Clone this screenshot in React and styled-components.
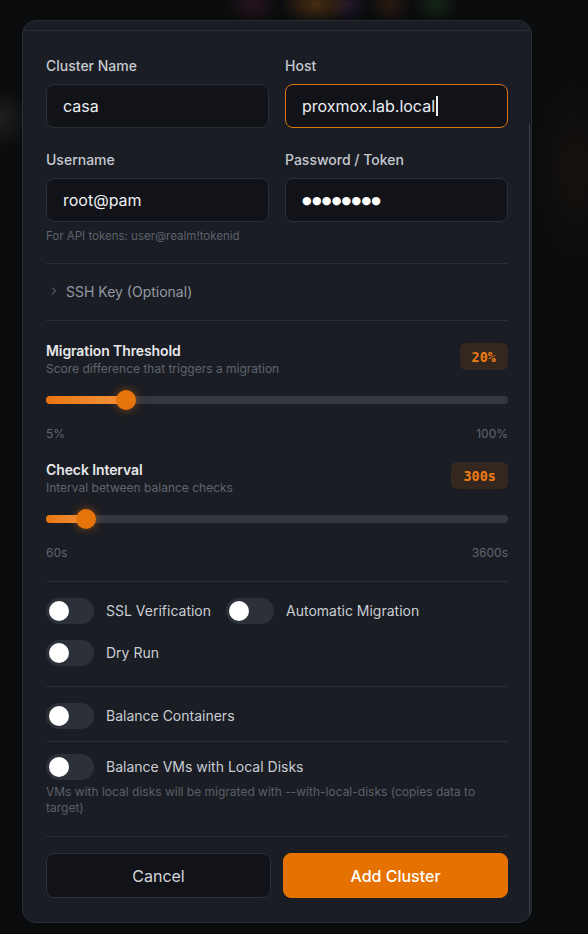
import React from "react";
import styled, { createGlobalStyle } from "styled-components";
import { ChevronRight } from "lucide-react";

const GlobalStyle = createGlobalStyle`
  html, body {
    margin: 0;
    height: 100%;
  }
  body {
    background:
      radial-gradient(ellipse 26px 18px at 253px 4px, rgba(110, 40, 70, 0.28), transparent),
      radial-gradient(ellipse 36px 20px at 316px 4px, rgba(170, 95, 20, 0.38), transparent),
      radial-gradient(ellipse 22px 18px at 348px 4px, rgba(100, 60, 130, 0.24), transparent),
      radial-gradient(ellipse 22px 18px at 390px 4px, rgba(140, 75, 20, 0.24), transparent),
      radial-gradient(ellipse 22px 18px at 436px 4px, rgba(40, 120, 40, 0.24), transparent),
      radial-gradient(ellipse 40px 90px at 575px 170px, rgba(90, 50, 10, 0.14), transparent),
      radial-gradient(ellipse 30px 30px at 0px 118px, rgba(120, 120, 120, 0.18), transparent),
      #0b0c0e;
    font-family: Inter, "Noto Sans", sans-serif;
    color: #e5e7eb;
  }
`;

const Page = styled.div`
  min-height: 100vh;
  box-sizing: border-box;
  padding: 20px 0 0 22px;
`;

const Modal = styled.div`
  position: relative;
  width: 510px;
  box-sizing: border-box;
  background: #1a1d23;
  border: 1px solid #2a2e36;
  border-radius: 14px;
  overflow: hidden;

  &::after {
    content: "";
    position: absolute;
    right: 1px;
    top: 103px;
    bottom: 4px;
    width: 1px;
    background: #3a3f48;
  }
`;

const TopStrip = styled.div`
  height: 9px;
  border-bottom: 1px solid #2a2e36;
`;

const Body = styled.div`
  padding: 25px 23px 24px;
`;

const FieldGrid = styled.div`
  display: grid;
  grid-template-columns: 1fr 1fr;
  column-gap: 16px;
  row-gap: 22px;
`;

const Field = styled.div`
  display: flex;
  flex-direction: column;
  gap: 8px;
`;

const Label = styled.label`
  font-size: 14px;
  line-height: 20px;
  font-weight: 500;
  color: #c5c9d0;
`;

const InputBox = styled.div`
  height: 44px;
  box-sizing: border-box;
  display: flex;
  align-items: center;
  padding: 0 16px;
  background: #111318;
  border: 1px solid ${(p) => (p.$focused ? "#dc7410" : "#2a2e36")};
  border-radius: 8px;
  font-size: 16px;
  color: #eceef1;
`;

const Caret = styled.span`
  display: inline-block;
  width: 1.5px;
  height: 20px;
  margin-left: 1px;
  background: #eceef1;
`;

const Dots = styled.span`
  font-family: "DejaVu Sans", sans-serif;
  font-size: 11px;
  letter-spacing: 0.3px;
  color: #ffffff;
`;

const Helper = styled.div`
  margin-top: -2px;
  font-size: 11.5px;
  line-height: 16px;
  color: #5d636d;
`;

const Divider = styled.div`
  height: 1px;
  background: #2a2e36;
  margin-top: ${(p) => p.$mt}px;
`;

const Collapse = styled.div`
  display: flex;
  align-items: center;
  gap: 6px;
  height: 20px;
  padding: 17px 0 19px 2px;
  font-size: 14px;
  color: #9399a3;
`;

const SliderBlock = styled.div`
  margin-top: ${(p) => p.$mt}px;
`;

const SliderHead = styled.div`
  display: flex;
  justify-content: space-between;
  align-items: flex-start;
`;

const Title = styled.div`
  font-size: 14px;
  line-height: 20px;
  font-weight: 600;
  letter-spacing: -0.1px;
  color: #e6e8eb;
`;

const Sub = styled.div`
  font-size: 12px;
  line-height: 16px;
  color: #5f6570;
`;

const Badge = styled.div`
  margin-top: 2px;
  height: 27px;
  padding: 0 12px;
  display: flex;
  align-items: center;
  border-radius: 6px;
  background: #33271f;
  color: #f07d14;
  font-family: "DejaVu Sans Mono", "Liberation Mono", monospace;
  font-size: 13.5px;
  font-weight: 700;
`;

const Track = styled.div`
  position: relative;
  margin-top: 13px;
  height: 20px;
  display: flex;
  align-items: center;

  &::before {
    content: "";
    position: absolute;
    left: 0;
    right: 0;
    height: 8px;
    border-radius: 4px;
    background: #33373f;
  }
`;

const Fill = styled.div`
  position: relative;
  height: 8px;
  border-radius: 4px;
  background: linear-gradient(90deg, #e8760f, #f39340);
`;

const Thumb = styled.div`
  position: absolute;
  top: 0;
  width: 20px;
  height: 20px;
  border-radius: 50%;
  background: #e5740a;
  box-shadow: 0 0 10px rgba(240, 120, 20, 0.5);
`;

const RangeLabels = styled.div`
  margin-top: 16px;
  display: flex;
  justify-content: space-between;
  font-size: 12px;
  line-height: 16px;
  color: #5f6570;
`;

const ToggleGroup = styled.div`
  display: flex;
  flex-wrap: wrap;
  column-gap: 15px;
  row-gap: 16px;
  padding-top: ${(p) => p.$pt}px;
`;

const ToggleItem = styled.div`
  display: flex;
  align-items: center;
  gap: 12px;
  font-size: 14px;
  line-height: 20px;
  color: #c9cdd3;
`;

const Switch = styled.div`
  width: 48px;
  height: 26px;
  box-sizing: border-box;
  padding: 0 3px;
  display: flex;
  align-items: center;
  border-radius: 13px;
  background: #2c3038;
`;

const Knob = styled.div`
  width: 20px;
  height: 20px;
  border-radius: 50%;
  background: #ffffff;
`;

const Note = styled.div`
  margin-top: 4px;
  font-size: 12px;
  line-height: 16px;
  color: #5a606a;
`;

const Actions = styled.div`
  margin-top: 16px;
  display: grid;
  grid-template-columns: 1fr 1fr;
  gap: 12px;
`;

const Button = styled.button`
  height: 45px;
  border-radius: 8px;
  font-family: inherit;
  font-size: 16px;
  font-weight: ${(p) => (p.$primary ? 500 : 400)};
  cursor: pointer;
  border: 1px solid ${(p) => (p.$primary ? "#e57200" : "#2c3038")};
  background: ${(p) => (p.$primary ? "#e57200" : "#111318")};
  color: ${(p) => (p.$primary ? "#ffffff" : "#d4d7dc")};
`;

function Slider({ title, sub, badge, value, min, max, minLabel, maxLabel, mt }) {
  const pct = (value - min) / (max - min);
  return (
    <SliderBlock $mt={mt}>
      <SliderHead>
        <div>
          <Title>{title}</Title>
          <Sub>{sub}</Sub>
        </div>
        <Badge>{badge}</Badge>
      </SliderHead>
      <Track>
        <Fill style={{ width: `calc(10px + ${pct} * (100% - 20px))` }} />
        <Thumb style={{ left: `calc(${pct} * (100% - 20px))` }} />
      </Track>
      <RangeLabels>
        <span>{minLabel}</span>
        <span>{maxLabel}</span>
      </RangeLabels>
    </SliderBlock>
  );
}

function Toggle({ label }) {
  return (
    <ToggleItem>
      <Switch>
        <Knob />
      </Switch>
      {label}
    </ToggleItem>
  );
}

export default function App() {
  return (
    <>
      <GlobalStyle />
      <Page>
        <Modal>
          <TopStrip />
          <Body>
            <FieldGrid>
              <Field>
                <Label>Cluster Name</Label>
                <InputBox>casa</InputBox>
              </Field>
              <Field>
                <Label>Host</Label>
                <InputBox $focused>
                  proxmox.lab.local
                  <Caret />
                </InputBox>
              </Field>
              <Field>
                <Label>Username</Label>
                <InputBox>root@pam</InputBox>
                <Helper>For API tokens: user@realm!tokenid</Helper>
              </Field>
              <Field>
                <Label>Password / Token</Label>
                <InputBox>
                  <Dots>●●●●●●●●</Dots>
                </InputBox>
              </Field>
            </FieldGrid>

            <Divider $mt={19} />
            <Collapse>
              <ChevronRight size={12} strokeWidth={1.6} />
              SSH Key (Optional)
            </Collapse>
            <Divider $mt={0} />

            <Slider
              mt={20}
              title="Migration Threshold"
              sub="Score difference that triggers a migration"
              badge="20%"
              value={20}
              min={5}
              max={100}
              minLabel="5%"
              maxLabel="100%"
            />
            <Slider
              mt={18}
              title="Check Interval"
              sub="Interval between balance checks"
              badge="300s"
              value={300}
              min={60}
              max={3600}
              minLabel="60s"
              maxLabel="3600s"
            />

            <Divider $mt={20} />
            <ToggleGroup $pt={16}>
              <Toggle label="SSL Verification" />
              <Toggle label="Automatic Migration" />
              <Toggle label="Dry Run" />
            </ToggleGroup>

            <Divider $mt={20} />
            <ToggleGroup $pt={16}>
              <Toggle label="Balance Containers" />
            </ToggleGroup>

            <Divider $mt={12} />
            <ToggleGroup $pt={12}>
              <Toggle label="Balance VMs with Local Disks" />
            </ToggleGroup>
            <Note>
              VMs with local disks will be migrated with --with-local-disks (copies data to
              target)
            </Note>

            <Divider $mt={20} />
            <Actions>
              <Button type="button">Cancel</Button>
              <Button type="button" $primary>
                Add Cluster
              </Button>
            </Actions>
          </Body>
        </Modal>
      </Page>
    </>
  );
}
